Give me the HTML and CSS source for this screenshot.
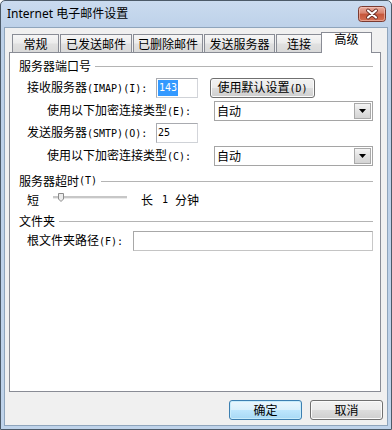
FILE: index.html
```html
<!DOCTYPE html>
<html lang="zh-CN">
<head>
<meta charset="utf-8">
<title>Internet 电子邮件设置</title>
<link rel="stylesheet" href="styles.css">
</head>
<body>
<div class="window">
  <div class="titlebar">
    <span class="title">Internet 电子邮件设置</span>
    <div class="close">
      <svg width="28" height="16" viewBox="0 0 28 16">
        <defs>
          <linearGradient id="cg" x1="0" y1="0" x2="0" y2="1">
            <stop offset="0" stop-color="#eab0a3"/>
            <stop offset="0.45" stop-color="#d9826d"/>
            <stop offset="0.5" stop-color="#c5553a"/>
            <stop offset="1" stop-color="#d77255"/>
          </linearGradient>
        </defs>
        <rect x="0.5" y="0.5" width="27" height="15" rx="3" fill="url(#cg)" stroke="#7a3a30"/>
        <rect x="1.5" y="1.5" width="25" height="13" rx="2" fill="none" stroke="#f6d0c6" stroke-opacity="0.55"/>
        <path d="M10 4.5 L18 11.5 M18 4.5 L10 11.5" stroke="#6a2d25" stroke-width="3.8" stroke-linecap="round"/>
        <path d="M10 4.5 L18 11.5 M18 4.5 L10 11.5" stroke="#ffffff" stroke-width="2.1" stroke-linecap="round"/>
      </svg>
    </div>
  </div>
  <div class="client">
    <div class="tabs">
      <div class="tab tab-general">常规</div>
      <div class="tab tab-sent">已发送邮件</div>
      <div class="tab tab-deleted">已删除邮件</div>
      <div class="tab tab-outgoing">发送服务器</div>
      <div class="tab tab-connect">连接</div>
      <div class="tab selected">高级</div>
    </div>
    <div class="panel">
      <div class="group">服务器端口号</div>
      <div class="row r-imap">
        <span class="lbl-port">接收服务器<span class="en">(IMAP)(I):</span></span>
        <div class="textbox port"><span class="en sel">143</span></div>
        <button class="btn btn-default">使用默认设置<span class="en">(D)</span></button>
      </div>
      <div class="row sub r-enc1">
        <span class="lbl-enc">使用以下加密连接类型<span class="en">(E):</span></span>
        <div class="combo"><span class="combo-text">自动</span><span class="drop"><svg width="7" height="4" viewBox="0 0 7 4"><path d="M0 0H7L3.5 4Z" fill="#000"/></svg></span></div>
      </div>
      <div class="row r-smtp">
        <span class="lbl-port">发送服务器<span class="en">(SMTP)(O):</span></span>
        <div class="textbox port"><span class="en">25</span></div>
      </div>
      <div class="row sub r-enc2">
        <span class="lbl-enc">使用以下加密连接类型<span class="en">(C):</span></span>
        <div class="combo"><span class="combo-text">自动</span><span class="drop"><svg width="7" height="4" viewBox="0 0 7 4"><path d="M0 0H7L3.5 4Z" fill="#000"/></svg></span></div>
      </div>
      <div class="group g-timeout">服务器超时<span class="en">(T)</span></div>
      <div class="row r-slider">
        <span>短</span>
        <div class="slider">
          <span class="track"></span>
          <svg class="thumb" width="8" height="10" viewBox="0 0 8 10"><path d="M1.5 0.5H6.5V6L4 8.5L1.5 6Z" fill="#ececec" stroke="#8c8c8c"/></svg>
        </div>
        <span class="long">长</span><span class="en one">1</span><span class="minute">分钟</span>
      </div>
      <div class="group g-folder">文件夹</div>
      <div class="row r-folder">
        <span class="lbl-folder">根文件夹路径<span class="en">(F):</span></span>
        <div class="textbox folder"></div>
      </div>
    </div>
    <div class="footer">
      <button class="btn btn-dlg focus">确定</button>
      <button class="btn btn-dlg">取消</button>
    </div>
  </div>
</div>
</body>
</html>
```
FILE: styles.css
```css
* { box-sizing: border-box; }
html, body { margin: 0; padding: 0; }
body {
  width: 392px;
  height: 430px;
  overflow: hidden;
  background: #ffffff;
  font-family: "Noto Sans CJK SC", sans-serif;
  font-size: 12px;
  line-height: 16px;
  color: #000;
}
.en {
  font-family: "DejaVu Sans Mono", monospace;
  font-size: 10px;
}
.window {
  width: 392px;
  height: 430px;
  border: 1px solid #4c5a68;
  border-radius: 5px 5px 0 0;
  background: linear-gradient(#cadbef, #bcd0e8 30px, #bfd3ea);
  padding: 0 3px 3px;
  display: flex;
  flex-direction: column;
}
.titlebar {
  height: 26px;
  flex: none;
  display: flex;
  align-items: center;
  justify-content: space-between;
  padding-left: 3px;
  padding-right: 2px;
}
.title {
  font-family: "Noto Sans", "Noto Sans CJK SC", sans-serif;
  font-size: 12px;
  color: #000;
}
.close { width: 28px; height: 16px; }
.close svg { display: block; }
.client {
  flex: 1;
  border: 1px solid #8fa5bc;
  background: #f0f0f0;
  display: flex;
  flex-direction: column;
}
.tabs {
  height: 20px;
  margin-top: 4px;
  padding-left: 7px;
  display: flex;
  align-items: flex-end;
  gap: 1px;
  flex: none;
}
.tab {
  height: 18px;
  border: 1px solid #898c95;
  border-bottom: none;
  background: linear-gradient(#f6f6f6, #ececec 45%, #e0e0e0 55%, #d9d9d9);
  line-height: 12px;
  padding-top: 3px;
  text-align: center;
  white-space: nowrap;
}
.tab-general { width: 47px; }
.tab-sent { width: 72px; }
.tab-deleted { width: 70px; }
.tab-outgoing { width: 71px; }
.tab-connect { width: 46px; }
.tab.selected {
  width: 51px;
  height: 21px;
  margin: 0 -2px -1px;
  padding-top: 0;
  background: #ffffff;
  position: relative;
  z-index: 1;
}
.panel {
  flex: 1;
  margin: 0 6px 0 4px;
  border: 1px solid #898c95;
  background: #ffffff;
  padding: 5px 7px 0 9px;
  display: flex;
  flex-direction: column;
}
.group {
  height: 16px;
  display: flex;
  align-items: center;
  white-space: nowrap;
}
.group::after {
  content: "";
  flex: 1;
  height: 1px;
  background: #b4b4b4;
  margin-left: 4px;
}
.g-timeout { margin-top: 6px; }
.g-folder { margin-top: 4px; }
.row {
  height: 22px;
  display: flex;
  align-items: center;
  padding-left: 8px;
  white-space: nowrap;
}
.row.sub { padding-left: 28px; }
.r-imap { margin-top: 3px; }
.r-enc1 { margin-top: 1px; }
.r-enc2 { margin-top: 1px; }
.r-slider { margin-top: 1px; height: 19px; }
.r-folder { margin-top: 1px; }
.lbl-port { width: 129px; flex: none; }
.lbl-enc { width: 167px; flex: none; }
.lbl-folder { width: 106px; flex: none; }
.textbox {
  height: 20px;
  background: #fff;
  border: 1px solid #a9abb0;
  border-right-color: #d3d5da;
  border-bottom-color: #cfd2d7;
  display: flex;
  align-items: center;
  padding-left: 1px;
}
.textbox.port { width: 42px; flex: none; }
.textbox.folder { flex: 1; border-color: #a8a8a8; border-right-color: #c8c8c8; border-bottom-color: #c4c4c4; }
.sel {
  background: #3399ff;
  color: #fff;
  padding: 0 1px;
}
.btn {
  height: 20px;
  border: 1px solid #707070;
  border-radius: 3px;
  background: linear-gradient(#f2f2f2 0%, #ebebeb 49%, #dddddd 50%, #cfcfcf 100%);
  box-shadow: inset 0 0 0 1px #fbfbfb;
  font-family: "Noto Sans CJK SC", sans-serif;
  font-size: 12px;
  line-height: 16px;
  color: #000;
  padding: 0;
  margin: 0;
  white-space: nowrap;
}
.btn-default { width: 105px; margin-left: 12px; flex: none; }
.combo {
  flex: 1;
  height: 20px;
  border: 1px solid #a5a5a5;
  background: #fff;
  display: flex;
  align-items: center;
  padding: 1px 1px 1px 2px;
}
.combo-text { flex: 1; }
.drop {
  width: 17px;
  height: 16px;
  border: 1px solid #a9a9a9;
  background: linear-gradient(#f4f4f4, #e2e2e2 50%, #d4d4d4);
  display: flex;
  align-items: center;
  justify-content: center;
}
.drop svg { display: block; }
.slider {
  position: relative;
  width: 74px;
  height: 19px;
  margin-left: 14px;
  flex: none;
}
.track {
  position: absolute;
  left: 0;
  right: 0;
  top: 6px;
  height: 2px;
  background: #c7c7c7;
  border-bottom: 1px solid #ebebeb;
  height: 3px;
}
.thumb {
  position: absolute;
  left: 4px;
  top: 3px;
  display: block;
}
.long { margin-left: 14px; }
.one { margin-left: 9px; width: 6px; }
.minute { margin-left: 7px; }
.footer {
  flex: none;
  height: 20px;
  margin: 8px 4px 5px 0;
  display: flex;
  justify-content: flex-end;
  gap: 8px;
}
.btn-dlg { width: 73px; }
.btn.focus {
  border-color: #3c7fb1;
  background: linear-gradient(#eaf6fd 0%, #d9f0fc 49%, #bee6fd 50%, #a7d9f5 100%);
  box-shadow: inset 0 0 0 1px #c8ecfb;
}
```
